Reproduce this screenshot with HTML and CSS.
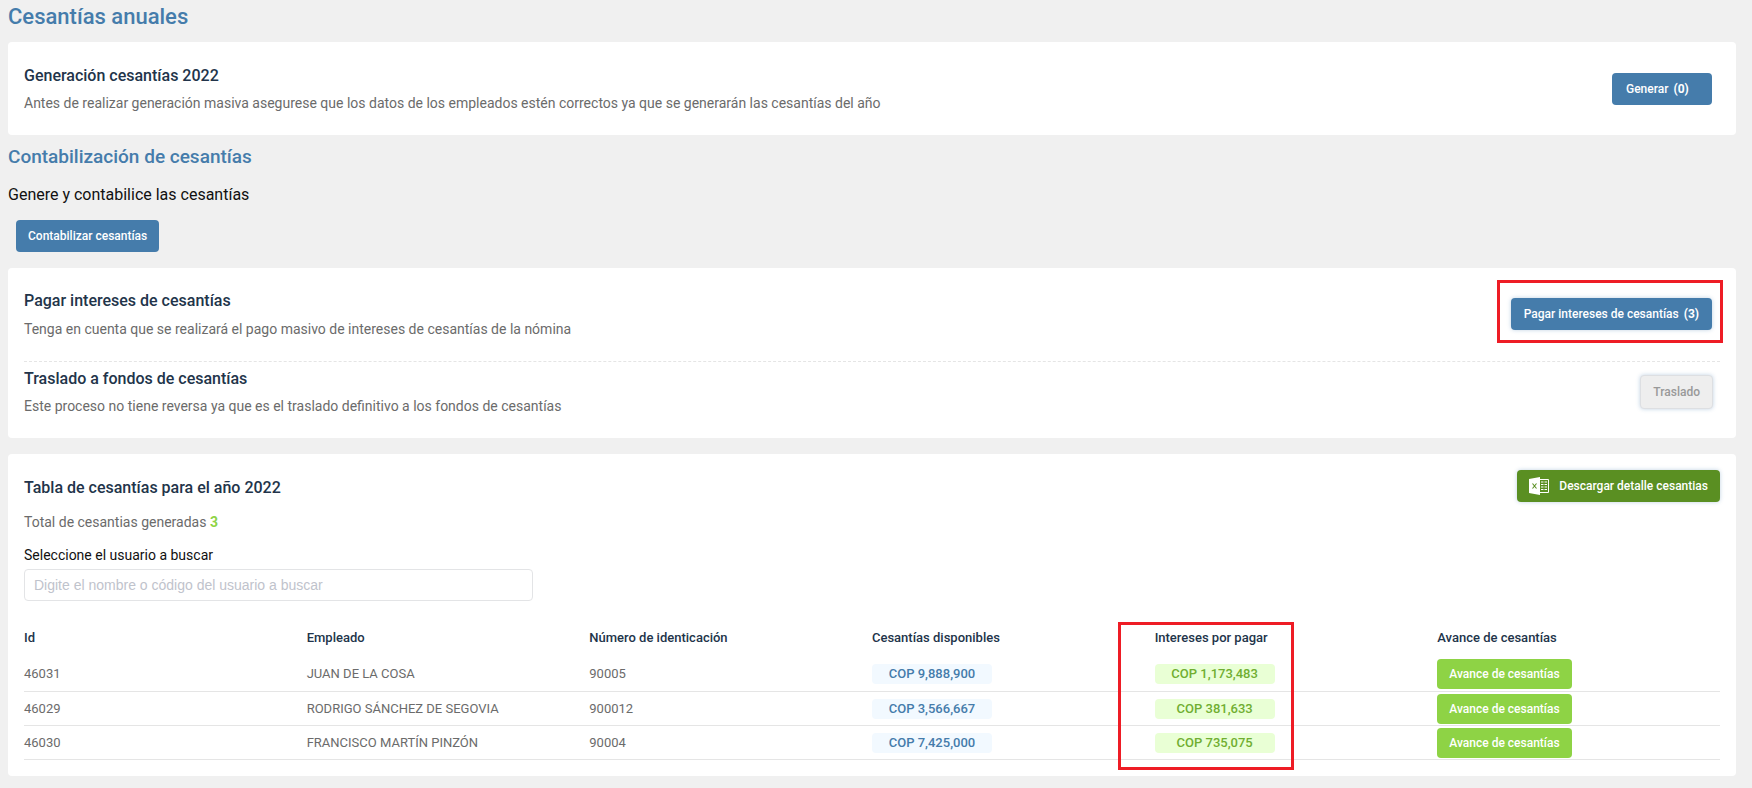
FILE: index.html
```html
<!DOCTYPE html>
<html lang="es">
<head>
<meta charset="utf-8">
<title>Cesantías anuales</title>
<link rel="stylesheet" href="styles.css">
</head>
<body>
<main class="page">
  <h1 class="page-title">Cesantías anuales</h1>

  <section class="card card-generate">
    <div>
      <h3 class="card-title">Generación cesantías 2022</h3>
      <p class="card-text">Antes de realizar generación masiva asegurese que los datos de los empleados estén correctos ya que se generarán las cesantías del año</p>
    </div>
    <button class="btn btn-primary btn-generate" type="button">Generar <b>(0)</b></button>
  </section>

  <h2 class="section-title">Contabilización de cesantías</h2>
  <p class="section-text">Genere y contabilice las cesantías</p>
  <button class="btn btn-primary btn-account" type="button">Contabilizar cesantías</button>

  <section class="card card-process">
    <div class="process process-pay">
      <div>
        <h3 class="card-title">Pagar intereses de cesantías</h3>
        <p class="card-text">Tenga en cuenta que se realizará el pago masivo de intereses de cesantías de la nómina</p>
      </div>
      <div class="pay-action">
        <button class="btn btn-primary btn-raised" type="button">Pagar intereses de cesantías <b>(3)</b></button>
        <span class="highlight highlight-button"></span>
      </div>
    </div>
    <div class="process process-transfer">
      <div>
        <h3 class="card-title">Traslado a fondos de cesantías</h3>
        <p class="card-text">Este proceso no tiene reversa ya que es el traslado definitivo a los fondos de cesantías</p>
      </div>
      <button class="btn btn-disabled btn-raised" type="button" disabled>Traslado</button>
    </div>
  </section>

  <section class="card card-table">
    <header class="table-head">
      <h3 class="card-title">Tabla de cesantías para el año 2022</h3>
      <button class="btn btn-excel btn-raised" type="button">
        <svg class="excel-icon" viewBox="0 0 20 18" aria-hidden="true">
          <path fill="#fff" d="M0 2 11 0v18L0 16z"/>
          <path fill="none" stroke="#fff" d="M11 2.500h8.500v13H11"/>
          <path fill="none" stroke="#fff" stroke-width="1.200" d="M12 5h2.500M15.500 5H18M12 7.500h2.500M15.500 7.500H18M12 10h2.500M15.500 10H18M12 12.500h2.500M15.500 12.500H18"/>
          <path fill="none" stroke="#5a8f22" stroke-width="1.100" d="m3.500 6.500 4 5m0-5-4 5"/>
        </svg>
        Descargar detalle cesantias
      </button>
    </header>
    <p class="card-text total">Total de cesantias generadas <b class="total-value">3</b></p>
    <label class="search-label" for="user">Seleccione el usuario a buscar</label>
    <input class="search" id="user" type="text" placeholder="Digite el nombre o código del usuario a buscar">

    <div class="table-wrap">
      <table class="table">
        <thead>
          <tr><th>Id</th><th>Empleado</th><th>Número de identicación</th><th>Cesantías disponibles</th><th>Intereses por pagar</th><th>Avance de cesantías</th></tr>
        </thead>
        <tbody>
          <tr><td>46031</td><td>JUAN DE LA COSA</td><td>90005</td><td><span class="pill pill-blue">COP 9,888,900</span></td><td><span class="pill pill-green">COP 1,173,483</span></td><td><button class="btn-advance" type="button">Avance de cesantías</button></td></tr>
          <tr><td>46029</td><td>RODRIGO SÁNCHEZ DE SEGOVIA</td><td>900012</td><td><span class="pill pill-blue">COP 3,566,667</span></td><td><span class="pill pill-green">COP 381,633</span></td><td><button class="btn-advance" type="button">Avance de cesantías</button></td></tr>
          <tr><td>46030</td><td>FRANCISCO MARTÍN PINZÓN</td><td>90004</td><td><span class="pill pill-blue">COP 7,425,000</span></td><td><span class="pill pill-green">COP 735,075</span></td><td><button class="btn-advance" type="button">Avance de cesantías</button></td></tr>
        </tbody>
      </table>
      <span class="highlight highlight-column"></span>
    </div>
  </section>
</main>
</body>
</html>
```
FILE: styles.css
```css
* { box-sizing: border-box; }

body {
  margin: 0;
  background: #f0f0f0;
  color: #111;
  font-family: Roboto, "Liberation Sans", sans-serif;
  font-size: 14px;
}

h1, h2, h3, p { margin: 0; }

.page { padding: 0 16px 10px 8px; }

.page-title {
  padding: 3px 0 11px;
  color: #457cab;
  font-size: 22px;
  font-weight: 500;
  line-height: 28px;
}

.card {
  background: #fff;
  border-radius: 4px;
}

.card-title {
  color: #22344a;
  font-size: 16px;
  font-weight: 500;
  line-height: 24px;
}

.card-text {
  margin-top: 4px;
  color: #6b6b6b;
  font-size: 14px;
  line-height: 24px;
}

.card-generate {
  display: flex;
  justify-content: space-between;
  align-items: flex-start;
  padding: 22px 24px 20px 16px;
}

.card-generate .card-text { margin-top: 3px; }

.section-title {
  padding-top: 8px;
  color: #457cab;
  font-size: 19px;
  font-weight: 500;
  line-height: 28px;
}

.section-text {
  padding-top: 12px;
  font-size: 16px;
  line-height: 24px;
}

.btn {
  height: 32px;
  padding: 0 13px;
  border: 0;
  border-radius: 4px;
  font-family: inherit;
  font-size: 12px;
  font-weight: 500;
  white-space: nowrap;
}

.btn b {
  margin-left: 2px;
  font-weight: 700;
}

.btn-primary {
  background: #457cab;
  color: #fff;
}

.btn-generate {
  width: 100px;
  margin-top: 9px;
  padding-left: 14px;
  text-align: left;
}

.btn-account {
  display: block;
  margin: 14px 8px 16px;
  padding: 0 12px;
}

.section-text + .btn-account { margin-top: 13px; }

.btn-raised { box-shadow: 0 0 4px #457cab55; }

.btn-disabled {
  height: 34px;
  padding: 0 12px;
  border: 1px solid #dddfe2;
  background: #eee;
  color: #999;
}

.card-process { padding: 20px 16px; }

.process {
  display: flex;
  justify-content: space-between;
  align-items: flex-start;
}

.process-pay {
  padding: 1px 8px 20px 0;
  border-bottom: 1px dashed #e5e5e5;
}

.pay-action {
  position: relative;
  padding-top: 9px;
}

.highlight {
  position: absolute;
  border: 3px solid #ee1c25;
  pointer-events: none;
}

.highlight-button { inset: -9px -11px -13px -14px; }

.process-transfer { padding: 5px 7px 0 0; }
.process-transfer .card-text { margin-top: 3px; }
.process-transfer .btn { margin-top: 8px; }

.card-table {
  margin-top: 16px;
  padding: 16px;
}

.table-head {
  display: flex;
  justify-content: space-between;
  align-items: flex-end;
}

.table-head .card-title { line-height: 28px; }

.btn-excel {
  display: flex;
  align-items: center;
  gap: 10px;
  padding: 0 12px;
  background: #5a8f22;
  color: #fff;
}

.excel-icon {
  width: 20px;
  height: 18px;
}

.total { margin-top: 8px; }
.total-value { color: #8ed345; }

.search-label {
  display: block;
  margin-top: 11px;
  font-size: 14px;
  line-height: 20px;
}

.search {
  display: block;
  width: 30%;
  height: 32px;
  margin-top: 4px;
  padding: 0 9px;
  border: 1px solid #e3e4e6;
  border-radius: 4px;
  font-family: "Liberation Sans", Arial, sans-serif;
  font-size: 14px;
}

.search::placeholder { color: #bfc3cc; }

.table-wrap {
  position: relative;
  margin-top: 18px;
}

.table {
  width: 100%;
  border-collapse: collapse;
  table-layout: fixed;
  font-size: 13px;
}

.table th {
  height: 38px;
  padding: 0 0 2px;
  color: #22344a;
  font-size: 13px;
  font-weight: 500;
  text-align: left;
}

.table td {
  height: 34px;
  padding: 2px 0 1px;
  border-bottom: 1px solid #e5e5e5;
  color: #6b6b6b;
  line-height: 20px;
}

.pill {
  display: block;
  width: 120px;
  border-radius: 4px;
  font-weight: 500;
  line-height: 20px;
  text-align: center;
}

.pill-blue {
  background: #f2f9ff;
  color: #457cab;
}

.pill-green {
  background: #e9ffd5;
  color: #70ae31;
}

.btn-advance {
  display: block;
  height: 30px;
  padding: 0 12px;
  border: 0;
  border-radius: 4px;
  background: #8ed345;
  color: #fff;
  font-family: inherit;
  font-size: 12px;
  font-weight: 500;
}

.highlight-column {
  top: 3px;
  bottom: -10px;
  left: calc(66.667% - 37px);
  width: 176px;
}
```
